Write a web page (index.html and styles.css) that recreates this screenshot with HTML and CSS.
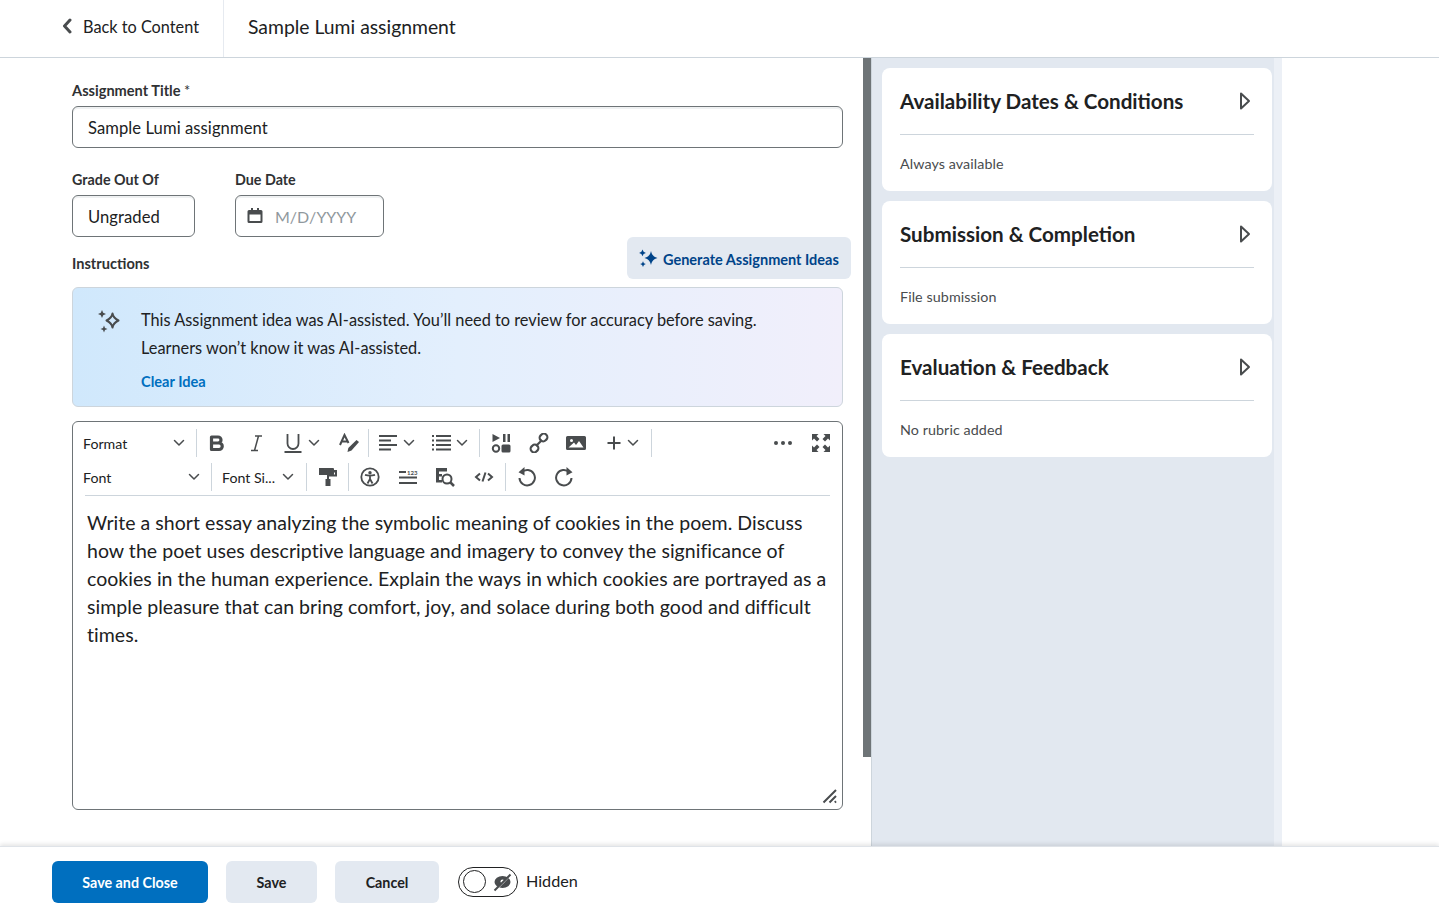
FILE: index.html
```html
<!DOCTYPE html>
<html lang="en">
<head>
<meta charset="utf-8">
<title>Sample Lumi assignment</title>
<link rel="stylesheet" href="styles.css">
</head>
<body>
<header class="topbar">
  <a class="back">
    <svg class="back-icon" width="10" height="16" viewBox="0 0 10 16"><path d="M8 2 2.500 8 8 14" fill="none" stroke="#494c4e" stroke-width="3" stroke-linecap="round" stroke-linejoin="round"/></svg>
    <span>Back to Content</span>
  </a>
  <h1 class="page-title">Sample Lumi assignment</h1>
</header>
<div class="main">
  <section class="form">
    <div class="field">
      <label class="label label-wide">Assignment Title <span class="req">*</span></label>
      <div class="input input-full">Sample Lumi assignment</div>
    </div>
    <div class="field-row">
      <div class="field">
        <label class="label">Grade Out Of</label>
        <div class="input input-grade">Ungraded</div>
      </div>
      <div class="field">
        <label class="label">Due Date</label>
        <div class="input input-date">
          <svg width="18" height="18" viewBox="0 0 18 18"><path fill="#494c4e" d="M3 3h2V1h2v2h4V1h2v2h2a1.500 1.500 0 0 1 1.500 1.500v10A1.500 1.500 0 0 1 15 16H3a1.500 1.500 0 0 1-1.500-1.500v-10A1.500 1.500 0 0 1 3 3Zm.5 4.500V14h11V7.500Z"/></svg>
          <span class="placeholder">M/D/YYYY</span>
        </div>
      </div>
    </div>
    <div class="instr-row">
      <span class="label label-wide label-instr">Instructions</span>
      <button class="btn-generate">
        <svg width="22" height="22" viewBox="0 0 22 22"><path fill="#004489" d="M13 4c.8 3.800 2.500 5.700 6.500 7-4 1.300-5.700 3.200-6.500 7-.8-3.800-2.500-5.700-6.500-7 4-1.300 5.700-3.200 6.500-7ZM4.500 2.500l1.100 2.300 2.300 1.100-2.300 1.100-1.100 2.300-1.100-2.300-2.300-1.100 2.300-1.100Zm.5 11.800.9 1.900 1.900.9-1.900.9-.9 1.900-.9-1.900-1.900-.9 1.900-.9Z"/></svg>
        <span class="btn-generate-text">Generate Assignment Ideas</span>
      </button>
    </div>
    <div class="alert">
      <svg class="alert-icon" width="26" height="26" viewBox="0 0 26 26"><path fill="none" stroke="#494c4e" stroke-width="2" stroke-linejoin="round" d="M16.500 6.500c.6 3.400 2.100 5.200 6 7-3.900 1.800-5.400 3.600-6 7-.6-3.400-2.100-5.200-6-7 3.900-1.800 5.400-3.600 6-7Z"/><path fill="#494c4e" d="m6 3 1.200 2.800L10 7 7.200 8.200 6 11 4.800 8.200 2 7l2.800-1.200Zm2 15.500 1 2.500 2.500 1-2.500 1-1 2.500-1-2.500-2.500-1 2.500-1Z"/></svg>
      <div class="alert-body">
        <p class="alert-text">This Assignment idea was AI-assisted. You’ll need to review for accuracy before saving. Learners won’t know it was AI-assisted.</p>
        <a class="alert-link">Clear Idea</a>
      </div>
    </div>
    <div class="editor">
      <div class="toolbar">
        <div class="tb-row tb-row-1">
          <div class="select select-format"><span>Format</span><svg class="chev" viewBox="0 0 12 8"><path d="M1.500 1.500 6 6l4.500-4.500"/></svg></div>
          <i class="sep"></i>
          <div class="tb w40"><svg width="20" height="20" viewBox="0 0 20 20"><path fill="none" stroke="#494c4e" stroke-width="3.200" stroke-linejoin="round" d="M4.500 4h6.500a3 3 0 0 1 0 6H4.500Zm0 6h7.500a3.250 3.250 0 0 1 0 6.500H4.500Z"/></svg></div>
          <div class="tb w37"><svg width="20" height="20" viewBox="0 0 20 20"><path fill="none" stroke="#494c4e" stroke-width="1.500" d="M9 3h7M5 17.500h7M12.500 3l-4 14.500"/></svg></div>
          <div class="tb w55 with-chev"><svg width="20" height="20" viewBox="0 0 20 20"><path fill="none" stroke="#494c4e" stroke-width="1.800" d="M4.500 1v9.500a5.500 5.500 0 0 0 11 0V1M1.500 19h17"/></svg><svg class="chev" viewBox="0 0 12 8"><path d="M1.500 1.500 6 6l4.500-4.500"/></svg></div>
          <div class="tb w39"><svg width="22" height="20" viewBox="0 0 22 20"><path fill="none" stroke="#494c4e" stroke-width="2" d="m2 12 4.500-10 4 8M3.800 8.500h6"/><path fill="#494c4e" d="m18.500 7 2.500 2-7.500 8.500-4 1.500.8-4Z"/></svg></div>
          <i class="sep"></i>
          <div class="tb w53 with-chev"><svg width="20" height="18" viewBox="0 0 20 18"><path stroke="#494c4e" stroke-width="2" d="M1 2h18M1 6.500h12M1 11h18M1 15.500h12"/></svg><svg class="chev" viewBox="0 0 12 8"><path d="M1.500 1.500 6 6l4.500-4.500"/></svg></div>
          <div class="tb w57 with-chev"><svg width="20" height="18" viewBox="0 0 20 18"><path stroke="#494c4e" stroke-width="2" d="M5 2h15M5 6.500h15M5 11h15M5 15.500h15M1 2h2M1 6.500h2M1 11h2M1 15.500h2"/></svg><svg class="chev" viewBox="0 0 12 8"><path d="M1.500 1.500 6 6l4.500-4.500"/></svg></div>
          <i class="sep"></i>
          <div class="tb w42"><svg width="20" height="20" viewBox="0 0 20 20"><path fill="#494c4e" d="M1.500 1 9 5 1.500 9ZM12 1h2.500v8H12Zm4.500 0H19v8h-2.500ZM12 11.500h6a1.500 1.500 0 0 1 1.500 1.500v5a1.500 1.500 0 0 1-1.500 1.500h-6a1.500 1.500 0 0 1-1.500-1.500v-5a1.500 1.500 0 0 1 1.500-1.500Z"/><circle cx="5" cy="15.500" r="3.200" fill="none" stroke="#494c4e" stroke-width="2"/></svg></div>
          <div class="tb w33"><svg width="20" height="20" viewBox="0 0 20 20"><g fill="none" stroke="#494c4e" stroke-width="2.200"><rect x="10.500" y="1" width="8" height="7" rx="3.500" transform="rotate(-45 14.500 4.500)"/><rect x="1.500" y="12" width="8" height="7" rx="3.500" transform="rotate(-45 5.500 15.500)"/><path d="m7 13 6-6"/></g></svg></div>
          <div class="tb w42"><svg width="20" height="16" viewBox="0 0 20 16"><path fill="#494c4e" fill-rule="evenodd" d="M1.500 1h17A1.500 1.500 0 0 1 20 2.500v11a1.500 1.500 0 0 1-1.500 1.500h-17A1.500 1.500 0 0 1 0 13.500v-11A1.500 1.500 0 0 1 1.500 1Zm1 11.500h15L13 6l-3 4-2-2.500ZM5.500 4a1.500 1.500 0 1 0 0 3 1.500 1.500 0 0 0 0-3Z"/></svg></div>
          <div class="tb w54 with-chev"><svg width="16" height="16" viewBox="0 0 16 16"><path stroke="#494c4e" stroke-width="2" d="M8 1.500v13M1.500 8h13"/></svg><svg class="chev" viewBox="0 0 12 8"><path d="M1.500 1.500 6 6l4.500-4.500"/></svg></div>
          <i class="sep"></i>
          <div class="tb-spacer"></div>
          <div class="tb w38"><svg width="20" height="6" viewBox="0 0 20 6"><g fill="#494c4e"><circle cx="3" cy="3" r="2"/><circle cx="10" cy="3" r="2"/><circle cx="17" cy="3" r="2"/></g></svg></div>
          <div class="tb w38"><svg width="20" height="20" viewBox="0 0 20 20"><path fill="#494c4e" d="M1 1h6.500L5.500 3l3 3L6 8.500l-3-3-2 2Zm18 0v6.500l-2-2-3 3L11.500 6l3-3-2-2ZM1 19v-6.500l2 2 3-3L8.500 14l-3 3 2 2Zm18 0h-6.500l2-2-3-3 2.500-2.500 3 3 2-2Z"/></svg></div>
        </div>
        <div class="tb-row tb-row-2">
          <div class="select select-font"><span>Font</span><svg class="chev" viewBox="0 0 12 8"><path d="M1.500 1.500 6 6l4.500-4.500"/></svg></div>
          <i class="sep"></i>
          <div class="select select-size"><span>Font Si...</span><svg class="chev" viewBox="0 0 12 8"><path d="M1.500 1.500 6 6l4.500-4.500"/></svg></div>
          <i class="sep"></i>
          <div class="tb w41"><svg width="20" height="20" viewBox="0 0 20 20"><path fill="#494c4e" d="M1 1h14a1 1 0 0 1 1 1v1h3v6.500h-8v2.500h1.500v7H7.500v-7H9V7.500h8V5.500h-1V7a1 1 0 0 1-1 1H1Z"/></svg></div>
          <i class="sep"></i>
          <div class="tb w41"><svg width="20" height="20" viewBox="0 0 20 20"><circle cx="10" cy="10" r="8.700" fill="none" stroke="#494c4e" stroke-width="1.800"/><circle cx="10" cy="5.700" r="1.700" fill="#494c4e"/><path fill="none" stroke="#494c4e" stroke-width="1.800" d="M5 7.800c3.300 1 6.700 1 10 0M10 9v3.500M10 12l-2.500 4.500M10 12l2.500 4.500"/></svg></div>
          <div class="tb w36"><svg width="20" height="18" viewBox="0 0 20 18"><path stroke="#494c4e" stroke-width="2" d="M1 9.500h18M1 15h18M1 4h7"/><text x="9" y="6.500" class="mini">123</text></svg></div>
          <div class="tb w37"><svg width="20" height="20" viewBox="0 0 20 20"><path fill="#494c4e" d="M1 1h11v3.500H4V7h3v2.500H4V13h3v2.500H1Z"/><circle cx="12" cy="12" r="4.500" fill="none" stroke="#494c4e" stroke-width="2"/><path stroke="#494c4e" stroke-width="2.500" d="m15 15 4 4"/></svg></div>
          <div class="tb w42"><svg width="20" height="12" viewBox="0 0 20 12"><path fill="none" stroke="#494c4e" stroke-width="2" d="M6 2.500 2 6l4 3.500M14 2.500 18 6l-4 3.500M11.500 1.500 8.500 10.500"/></svg></div>
          <i class="sep"></i>
          <div class="tb w41"><svg width="20" height="20" viewBox="0 0 20 20"><path fill="none" stroke="#494c4e" stroke-width="2" d="M4.700 5.300A7.700 7.700 0 1 1 2.500 11"/><path fill="#494c4e" d="M7.500 0v8.500L1.500 5.300Z"/></svg></div>
          <div class="tb w33"><svg width="20" height="20" viewBox="0 0 20 20"><path fill="none" stroke="#494c4e" stroke-width="2" d="M15.300 5.300A7.700 7.700 0 1 0 17.500 11"/><path fill="#494c4e" d="M12.500 0v8.500l6-3.200Z"/></svg></div>
        </div>
      </div>
      <div class="editor-body">
        <p>Write a short essay analyzing the symbolic meaning of cookies in the poem. Discuss how the poet uses descriptive language and imagery to convey the significance of cookies in the human experience. Explain the ways in which cookies are portrayed as a simple pleasure that can bring comfort, joy, and solace during both good and difficult times.</p>
      </div>
      <svg class="resize" width="16" height="16" viewBox="0 0 16 16"><path stroke="#494c4e" stroke-width="2" d="M1.500 14.500 14 2M7.500 14.500 14 8M12.800 14.500l1.200-1.200"/></svg>
    </div>
  </section>
  <div class="scroll"><div class="scroll-thumb"></div></div>
  <aside class="side">
    <div class="cards">
      <div class="card">
        <div class="card-head"><h2 class="card-title">Availability Dates &amp; Conditions</h2><svg width="12" height="20" viewBox="0 0 12 20"><path d="M2 2.500 10 10 2 17.500Z" fill="none" stroke="#494c4e" stroke-width="2" stroke-linejoin="round"/></svg></div>
        <p class="card-text">Always available</p>
      </div>
      <div class="card">
        <div class="card-head"><h2 class="card-title">Submission &amp; Completion</h2><svg width="12" height="20" viewBox="0 0 12 20"><path d="M2 2.500 10 10 2 17.500Z" fill="none" stroke="#494c4e" stroke-width="2" stroke-linejoin="round"/></svg></div>
        <p class="card-text">File submission</p>
      </div>
      <div class="card">
        <div class="card-head"><h2 class="card-title">Evaluation &amp; Feedback</h2><svg width="12" height="20" viewBox="0 0 12 20"><path d="M2 2.500 10 10 2 17.500Z" fill="none" stroke="#494c4e" stroke-width="2" stroke-linejoin="round"/></svg></div>
        <p class="card-text">No rubric added</p>
      </div>
    </div>
    <div class="side-track"></div>
  </aside>
</div>
<footer class="footer">
  <button class="btn btn-primary">Save and Close</button>
  <button class="btn btn-save">Save</button>
  <button class="btn btn-cancel">Cancel</button>
  <div class="toggle">
    <span class="knob"></span>
    <svg width="20" height="20" viewBox="0 0 20 20"><ellipse cx="10.500" cy="10" rx="8" ry="6" fill="#494c4e"/><circle cx="10.500" cy="9.500" r="2" fill="#fff"/><path stroke="#fff" stroke-width="1.200" d="M4 18 18 4"/><path stroke="#494c4e" stroke-width="2" d="M2.500 18.500 18.500 2.500"/></svg>
  </div>
  <span class="toggle-label">Hidden</span>
</footer>
</body>
</html>
```
FILE: styles.css
```css
* { box-sizing: border-box; }
html, body { height: 100%; }
body {
  margin: 0;
  height: 915px;
  overflow: hidden;
  display: flex;
  flex-direction: column;
  background: #fff;
  color: #202122;
  font-family: Lato, "Noto Sans", sans-serif;
}
h1, h2, p { margin: 0; }

.topbar {
  flex: none;
  height: 58px;
  display: flex;
  align-items: stretch;
  border-bottom: 1px solid #cdd5dc;
}
.back {
  width: 224px;
  padding: 0 0 5px 62px;
  display: flex;
  align-items: center;
  gap: 11px;
  font-size: 16.3px;
  border-right: 1px solid #e6eaf0;
}
.back-icon { flex: none; }
.page-title {
  font-size: 19.35px;
  font-weight: 400;
  padding: 0 0 5px 24px;
  align-self: center;
}

.main { flex: 1; min-height: 0; display: flex; }
.form { width: 863px; flex: none; padding: 23px 20px 0 72px; }
.field { display: flex; flex-direction: column; }
.label {
  font-size: 14.3px;
  font-weight: 700;
  line-height: 19px;
  color: #2f3133;
  margin-bottom: 6px;
}
.label-wide { font-size: 14.6px; }
.req { font-weight: 400; }
.input {
  height: 42px;
  border: 1px solid #6e7477;
  border-radius: 6px;
  padding: 2px 15px 0;
  font-size: 16.6px;
  letter-spacing: .07px;
  display: flex;
  align-items: center;
  box-shadow: inset 0 2px 0 rgba(177, 185, 190, .2);
}
.input-full { width: 771px; }
.input-grade { width: 123px; }
.input-date { width: 149px; padding: 0 15px 0 10px; gap: 11px; }
.placeholder { color: #90989d; font-size: 16px; letter-spacing: 0; }
.field-row { display: flex; gap: 40px; margin-top: 22px; }

.instr-row {
  height: 42px;
  display: flex;
  justify-content: space-between;
  align-items: center;
  margin-right: -8px;
  margin-bottom: 8px;
}
.label-instr { margin: 11px 0 0; }
.btn-generate {
  width: 224px;
  height: 42px;
  border: 0;
  border-radius: 6px;
  background: #e3e9f1;
  color: #004489;
  font: 700 14.5px Lato, sans-serif;
  display: flex;
  align-items: center;
  gap: 3px;
  padding: 0 0 0 11px;
}
.btn-generate-text { padding-top: 2px; }

.alert {
  width: 771px;
  height: 120px;
  border: 1px solid #cdd5dc;
  border-radius: 6px;
  background: linear-gradient(90deg, #d0e8fc 0%, #e3effd 50%, #f1effb 100%);
  display: flex;
  padding: 18px 20px 0 23px;
  gap: 19px;
}
.alert-icon { flex: none; margin-top: 1px; }
.alert-text { font-size: 16.33px; line-height: 28px; width: 640px; }
.alert-link {
  display: block;
  margin-top: 11px;
  font-size: 14.6px;
  font-weight: 700;
  line-height: 17px;
  color: #006fbf;
}

.editor {
  position: relative;
  width: 771px;
  height: 389px;
  margin-top: 14px;
  border: 1px solid #6e7477;
  border-radius: 6px;
}
.toolbar {
  margin: 0 12px 0 12px;
  height: 74px;
  border-bottom: 1px solid #cdd5dc;
  padding-top: 6px;
}
.tb-row { display: flex; align-items: center; margin-left: -12px; margin-right: -10px; }
.tb-row-1 { height: 30px; }
.tb-row-2 { height: 30px; margin-top: 4px; }
.sep { flex: none; width: 1px; height: 28px; background: #cdd5dc; }
.select {
  display: flex;
  align-items: center;
  justify-content: space-between;
  font-size: 14.2px;
  color: #202122;
  flex: none;
}
.select-format { width: 123px; padding: 0 11px 0 10px; }
.select-font { width: 138px; padding: 0 11px 0 10px; }
.select-size { width: 94px; padding: 0 12px 0 10px; }
.chev { width: 12px; height: 8px; flex: none; }
.chev path { fill: none; stroke: #494c4e; stroke-width: 1.500; stroke-linecap: round; stroke-linejoin: round; }
.tb { flex: none; display: flex; align-items: center; justify-content: center; }
.w33 { width: 33px; }
.w36 { width: 36px; }
.w37 { width: 37px; }
.w38 { width: 38px; }
.w39 { width: 39px; }
.w40 { width: 40px; }
.w41 { width: 41px; }
.w42 { width: 42px; }
.w53 { width: 53px; }
.w54 { width: 54px; }
.w55 { width: 55px; }
.w57 { width: 57px; }
.with-chev { justify-content: flex-start; padding-left: 9px; gap: 5px; }
.tb-spacer { flex: 1; }
.mini { font: 700 6px Lato, sans-serif; fill: #494c4e; }
.editor-body { padding: 13px 8px 0 14px; font-size: 19.5px; letter-spacing: .04px; line-height: 28px; color: #202122; }
.resize { position: absolute; right: 4px; bottom: 5px; }

.scroll { flex: none; width: 8px; background: #fff; }
.scroll-thumb { height: 699px; background: #6e7477; }
.side {
  flex: none;
  width: 411px;
  display: flex;
  border-left: 1px solid #cdd5dc;
  background: #e2e8f0;
}
.cards { flex: none; width: 402px; padding: 10px 0 0 10px; display: flex; flex-direction: column; gap: 10px; }
.side-track { flex: none; width: 8px; background: #ecf0f6; }
.card { width: 390px; height: 123px; background: #fff; border-radius: 8px; padding: 0 18px; }
.card-head {
  height: 67px;
  display: flex;
  align-items: center;
  justify-content: space-between;
  border-bottom: 1px solid #cdd5dc;
  padding: 0 3px 0 0;
}
.card-title { font-size: 20.6px; font-weight: 700; color: #202122; }
.card-text { font-size: 14.3px; line-height: 17px; margin-top: 20px; color: #494c4e; letter-spacing: .08px; }

.footer {
  flex: none;
  height: 69px;
  position: relative;
  display: flex;
  align-items: center;
  padding: 0 0 0 52px;
  background: #fff;
  box-shadow: 0 -2px 4px rgba(0, 0, 0, .1);
  border-top: 1px solid #dfe3e8;
}
.btn {
  height: 42px;
  border: 0;
  border-radius: 6px;
  padding: 2px 0 0;
  font: 700 14.3px Lato, sans-serif;
  margin-top: 1px;
}
.btn-primary { width: 156px; background: #006fbf; color: #fff; }
.btn-save { width: 91px; margin-left: 18px; background: #e3e9f1; color: #202122; }
.btn-cancel { width: 104px; margin-left: 18px; background: #e3e9f1; color: #202122; }
.toggle {
  width: 60px;
  height: 30px;
  margin: 1px 0 0 19px;
  border: 1px solid #202122;
  border-radius: 15px;
  display: flex;
  align-items: center;
  justify-content: space-between;
  padding: 0 5px 0 4px;
}
.knob { width: 23px; height: 23px; border-radius: 50%; border: 1px solid #202122; background: #fff; }
.toggle-label { margin: 0 0 1px 8px; font-size: 16.2px; color: #202122; }
```
